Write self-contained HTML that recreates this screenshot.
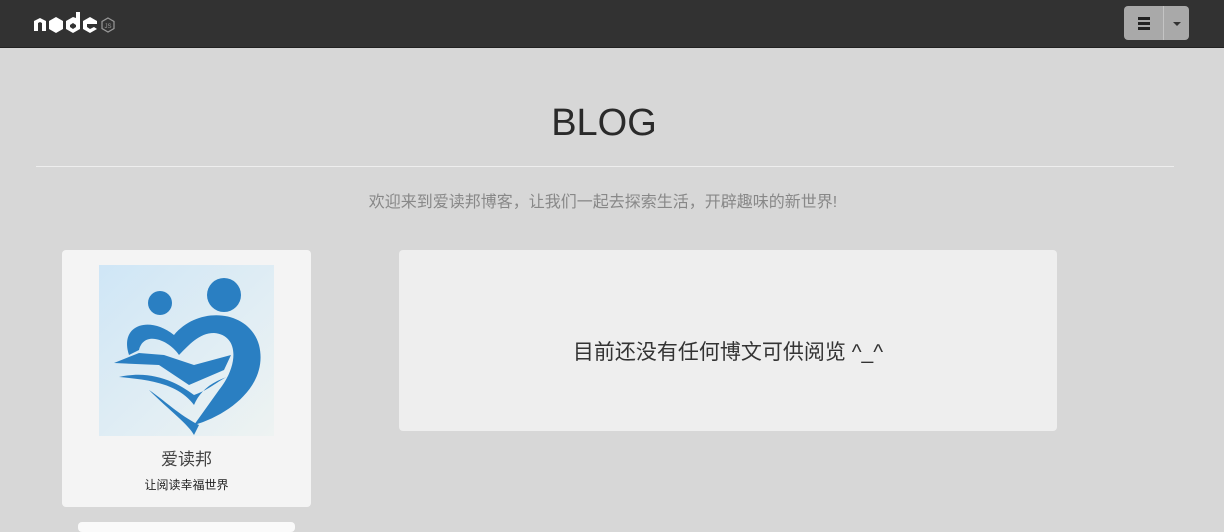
<!DOCTYPE html>
<html><head><meta charset="utf-8"><style>
*{margin:0;padding:0;box-sizing:border-box}
body{width:1224px;height:526px;overflow:hidden;background:#d7d7d7;font-family:"Liberation Sans","Noto Sans CJK SC",sans-serif;position:relative}
.nav{position:absolute;left:0;top:0;width:1224px;height:48px;background:#323232;border-bottom:1px solid #222}
.btn{position:absolute;left:1124px;top:6px;width:65px;height:34px;background:#a9a9a9;border-radius:4px}
.btn .sep{position:absolute;left:39px;top:0;width:1px;height:34px;background:#c4c4c4}
h1{position:absolute;left:-8px;width:1224px;top:102px;text-align:center;font-weight:normal;font-size:38px;color:#2a2a2a}
.hr{position:absolute;left:36px;top:166px;width:1138px;height:1px;background:#eee}
.sub{position:absolute;left:-9px;width:1224px;top:188px;text-align:center;font-size:16px;color:#888}
.card{position:absolute;left:62px;top:250px;width:249px;height:257px;background:#f4f4f4;border-radius:4px}
.main{position:absolute;left:399px;top:250px;width:658px;height:181px;background:#eee;border-radius:4px;text-align:center;line-height:205px;font-size:21px;color:#333}
.box2{position:absolute;left:78px;top:522px;width:217px;height:10px;background:#fafafa;border-radius:4px}
</style></head><body>
<div class="nav">
<svg style="position:absolute;left:33px;top:12px" width="92" height="22" viewBox="0 0 92 22">
<g fill="#fff">
<path d="M1 19V9l6-3 6 3v10h-4v-8l-2-1-2 1v8z"/>
<path d="M23 5l7 4v8l-7 4-7-4V9z"/>
<path d="M43 0h4v17l-7 4-7-4V9l7-4 3 1z M40 11l-3 2v2l3 2 3-2v-2z" fill-rule="evenodd"/>
<path d="M57 5l7 4v3h-10v3l3 2 4-2 3 2-7 4-7-4V9z"/>
</g>
<path d="M75 6l6 3.5v7L75 20l-6-3.5v-7z" fill="none" stroke="#999" stroke-width="1.2"/>
<text x="75" y="16" font-size="6" fill="#999" text-anchor="middle" font-family="Liberation Sans">JS</text>
</svg>
<div class="btn"><div class="sep"></div>
<div style="position:absolute;left:14px;top:11px;width:12px;height:3px;background:#222"></div>
<div style="position:absolute;left:14px;top:16px;width:12px;height:3px;background:#222"></div>
<div style="position:absolute;left:14px;top:21px;width:12px;height:3px;background:#222"></div>
<div style="position:absolute;left:49px;top:16px;border:4px solid transparent;border-top:4px solid #333"></div>
</div>
</div>
<h1>BLOG</h1>
<div class="hr"></div>
<div class="sub">欢迎来到爱读邦博客，让我们一起去探索生活，开辟趣味的新世界!</div>
<div class="card">
<svg style="position:absolute;left:37px;top:15px" width="175" height="171" viewBox="0 0 175 171">
<defs><linearGradient id="g" x1="0" y1="0" x2="1" y2="1"><stop offset="0" stop-color="#cfe6f6"/><stop offset="1" stop-color="#eef3f2"/></linearGradient></defs>
<rect width="175" height="171" fill="url(#g)"/>
<g fill="#2a7fc2">
<circle cx="61" cy="38" r="12"/><circle cx="125" cy="30" r="17"/>
<path d="M30 90C20 60 50 50 75 70C100 40 150 45 160 80C170 120 130 150 95 160L120 125C140 100 140 70 115 68C100 68 90 80 80 90C70 75 45 65 40 85z"/>
<path d="M15 98L60 100L90 120L125 105L132 90L95 100L65 90L40 88z"/>
<path d="M20 112C50 105 75 115 95 130C110 125 120 115 128 112C110 118 100 128 95 140C80 120 55 115 20 112z"/>
<path d="M50 125C70 145 90 160 95 170L100 160C80 150 65 135 50 125z"/>
</g>
</svg>
<div style="position:absolute;left:0;width:249px;top:195px;text-align:center;font-size:17px;color:#444">爱读邦</div>
<div style="position:absolute;left:0;width:249px;top:226px;text-align:center;font-size:12px;color:#222">让阅读幸福世界</div>
</div>
<div class="main">目前还没有任何博文可供阅览 ^_^</div>
<div class="box2"></div>
</body></html>
